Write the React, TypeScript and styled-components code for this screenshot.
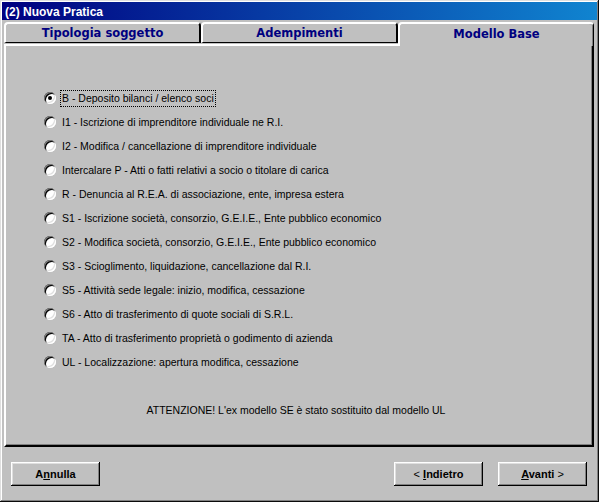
import React from 'react';
import styled, { createGlobalStyle } from 'styled-components';

const GlobalStyle = createGlobalStyle`
  html, body {
    margin: 0;
    padding: 0;
    background: #c0c0c0;
  }
  * {
    box-sizing: border-box;
  }
`;

const Window = styled.div`
  width: 599px;
  height: 502px;
  display: flex;
  flex-direction: column;
  background: #c0c0c0;
  padding: 2px;
  box-shadow: inset -1px -1px #0a0a0a, inset 1px 1px #dfdfdf,
    inset -2px -2px #808080, inset 2px 2px #ffffff;
  font-family: 'Liberation Sans', Arial, sans-serif;
`;

const TitleBar = styled.div`
  height: 18px;
  display: flex;
  align-items: center;
  padding: 1px 0 0 3px;
  background: linear-gradient(to right, #000080, #1084d0);
  color: #ffffff;
  font-weight: bold;
  font-size: 12px;
`;

const Body = styled.div`
  flex: 1;
  display: flex;
  flex-direction: column;
  padding: 2px 3px 0 2px;
`;

const TabStrip = styled.div`
  display: flex;
  height: 22px;
`;

const Tab = styled.div<{ $active?: boolean }>`
  flex: 1;
  display: flex;
  align-items: center;
  justify-content: center;
  background: #c0c0c0;
  color: #000080;
  font-family: 'DejaVu Sans', Verdana, sans-serif;
  font-weight: bold;
  font-size: 11.5px;
  border-top: 2px solid #ffffff;
  border-left: 2px solid #ffffff;
  border-right: 2px solid #000000;
  border-radius: 4px 4px 0 0;
  ${({ $active }) =>
    $active
      ? `
    position: relative;
    z-index: 1;
    height: 24px;
    margin-bottom: -2px;
    padding-bottom: 2px;
    border-right: 1px solid #000000;
    box-shadow: inset -1px 0 #808080;
  `
      : `
    height: 21px;
    border-bottom: 1px solid #000000;
  `}
`;

const Panel = styled.div`
  height: 403px;
  display: flex;
  flex-direction: column;
  padding: 40px 0 0 38px;
  border-top: 2px solid #ffffff;
  border-left: 2px solid #ffffff;
  border-right: 2px solid #000000;
  border-bottom: 2px solid #000000;
  box-shadow: inset -1px -1px #808080;
  font-size: 10.5px;
  color: #000000;
`;

const OptionList = styled.div`
  display: flex;
  flex-direction: column;
`;

const Option = styled.div`
  height: 24px;
  display: flex;
  align-items: center;
  gap: 4px;
`;

const Radio = styled.span<{ $checked?: boolean }>`
  width: 12px;
  height: 12px;
  flex: none;
  border-radius: 50%;
  background: #ffffff;
  display: flex;
  align-items: center;
  justify-content: center;
  box-shadow: inset 1px 1px #808080, inset -1px -1px #ffffff,
    inset 2px 2px #000000, inset -2px -2px #dfdfdf;
  &::after {
    content: '';
    width: 4px;
    height: 4px;
    border-radius: 50%;
    background: ${({ $checked }) => ($checked ? '#000000' : 'transparent')};
  }
`;

const Label = styled.span<{ $focused?: boolean }>`
  padding: 1px 1px 2px;
  border: 1px dotted ${({ $focused }) => ($focused ? '#000000' : 'transparent')};
  white-space: nowrap;
`;

const Notice = styled.div`
  margin: 30px 0 0 -38px;
  padding-right: 6px;
  text-align: center;
  font-size: 10.5px;
`;

const Footer = styled.div`
  flex: 1;
  display: flex;
  align-items: flex-start;
  padding: 15px 7px 0 7px;
  gap: 15px;
`;

const Spacer = styled.div`
  flex: 1;
`;

const Button = styled.button`
  width: 89px;
  height: 24px;
  background: #c0c0c0;
  border: none;
  font-family: 'Liberation Sans', Arial, sans-serif;
  font-weight: bold;
  font-size: 11px;
  color: #000000;
  box-shadow: inset -1px -1px #000000, inset 1px 1px #ffffff,
    inset -2px -2px #808080, inset 2px 2px #dfdfdf;
  padding: 0;
`;

const Arrow = styled.span`
  font-weight: normal;
`;

const options = [
  'B - Deposito bilanci / elenco soci',
  'I1 - Iscrizione di imprenditore individuale ne R.I.',
  'I2 - Modifica / cancellazione di imprenditore individuale',
  'Intercalare P - Atti o fatti relativi a socio o titolare di carica',
  'R - Denuncia al R.E.A. di associazione, ente, impresa estera',
  'S1 - Iscrizione società, consorzio, G.E.I.E., Ente pubblico economico',
  'S2 - Modifica società, consorzio, G.E.I.E., Ente pubblico economico',
  'S3 - Scioglimento, liquidazione, cancellazione dal R.I.',
  'S5 - Attività sede legale: inizio, modifica, cessazione',
  'S6 - Atto di trasferimento di quote sociali di S.R.L.',
  'TA - Atto di trasferimento proprietà o godimento di azienda',
  'UL - Localizzazione: apertura modifica, cessazione',
];

const App: React.FC = () => (
  <>
    <GlobalStyle />
    <Window>
      <TitleBar>(2) Nuova Pratica</TitleBar>
      <Body>
        <TabStrip>
          <Tab>Tipologia soggetto</Tab>
          <Tab>Adempimenti</Tab>
          <Tab $active>Modello Base</Tab>
        </TabStrip>
        <Panel>
          <OptionList>
            {options.map((text, i) => (
              <Option key={text}>
                <Radio $checked={i === 0} />
                <Label $focused={i === 0}>{text}</Label>
              </Option>
            ))}
          </OptionList>
          <Notice>ATTENZIONE! L'ex modello SE è stato sostituito dal modello UL</Notice>
        </Panel>
        <Footer>
          <Button>
            A<u>n</u>nulla
          </Button>
          <Spacer />
          <Button>
            <Arrow>&lt;</Arrow> <u>I</u>ndietro
          </Button>
          <Button>
            <u>A</u>vanti <Arrow>&gt;</Arrow>
          </Button>
        </Footer>
      </Body>
    </Window>
  </>
);

export default App;
